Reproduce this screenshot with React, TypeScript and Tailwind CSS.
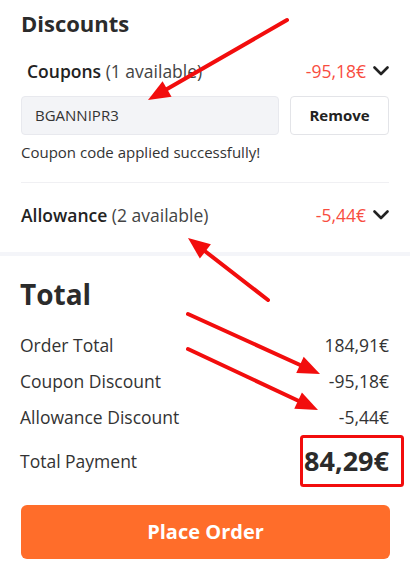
import React from "react";

const arrows = [
	{ x1: 287, y1: 20, x2: 148, y2: 100 },
	{ x1: 268, y1: 300, x2: 188, y2: 238 },
	{ x1: 188, y1: 314, x2: 320, y2: 374 },
	{ x1: 188, y1: 349, x2: 318, y2: 410 },
];

function Chevron() {
	return (
		<svg width="16" height="10" viewBox="0 0 16 10" className="ml-[7px]">
			<polyline
				points="1.5,1.5 8,8 14.5,1.5"
				fill="none"
				stroke="#222"
				strokeWidth="2.6"
				strokeLinecap="round"
				strokeLinejoin="round"
			/>
		</svg>
	);
}

function Arrow({ x1, y1, x2, y2 }: { x1: number; y1: number; x2: number; y2: number }) {
	const dx = x2 - x1;
	const dy = y2 - y1;
	const len = Math.hypot(dx, dy);
	const ux = dx / len;
	const uy = dy / len;
	const headLen = 22;
	const headW = 9;
	const bx = x2 - ux * headLen;
	const by = y2 - uy * headLen;
	const pts = `${x2},${y2} ${bx - uy * headW},${by + ux * headW} ${bx + uy * headW},${by - ux * headW}`;
	return (
		<g>
			<line x1={x1} y1={y1} x2={bx + ux * 2} y2={by + uy * 2} stroke="#f20d0d" strokeWidth="4" strokeLinecap="round" />
			<polygon points={pts} fill="#f20d0d" />
		</g>
	);
}

function Row({ label, value }: { label: string; value: string }) {
	return (
		<div className="flex items-center justify-between h-[24px] text-[17.5px] leading-[24px]">
			<span>{label}</span>
			<span>{value}</span>
		</div>
	);
}

export default function App() {
	return (
		<div
			className="relative w-[410px] h-[574px] overflow-hidden bg-white text-[#333]"
			style={{ fontFamily: '"Open Sans", sans-serif' }}
		>
			{/* Discounts */}
			<div className="px-[21px] pt-[7px] pb-[25px]">
				<h2 className="text-[22px] leading-[32px] font-bold text-[#2b2b2b]">Discounts</h2>

				<div className="mt-[20px] flex items-center justify-between pl-[6px] h-[24px] text-[17.5px] leading-[24px]">
					<div>
						<span className="font-semibold text-[#222]">Coupons</span>
						<span className="text-[#444]"> (1 available)</span>
					</div>
					<div className="flex items-center">
						<span className="text-[#f84d3f]">-95,18€</span>
						<Chevron />
					</div>
				</div>

				<div className="mt-[13px] flex gap-[11px]">
					<div className="flex-1 h-[39px] bg-[#f3f4f7] border border-[#e8e9ee] rounded-[4px] flex items-center px-[13px] text-[15px] text-[#333]">
						BGANNIPR3
					</div>
					<button className="w-[99px] h-[39px] bg-white border border-[#e3e4e8] rounded-[4px] text-[15px] font-bold text-[#222]">
						Remove
					</button>
				</div>

				<p className="mt-[8px] text-[15px] leading-[18px] text-[#333]">
					Coupon code applied successfully!
				</p>

				<div className="mt-[21px] h-px bg-[#f0f0f3]" />

				<div className="mt-[20px] flex items-center justify-between h-[24px] text-[17.5px] leading-[24px]">
					<div>
						<span className="font-semibold text-[#222]">Allowance</span>
						<span className="text-[#444]"> (2 available)</span>
					</div>
					<div className="flex items-center">
						<span className="text-[#f84d3f]">-5,44€</span>
						<Chevron />
					</div>
				</div>
			</div>

			<div className="h-[4px] bg-[#f4f5f9]" />

			{/* Total */}
			<div className="px-[20px] pt-[20px]">
				<h2 className="text-[28px] leading-[36px] font-bold text-[#2b2b2b]">Total</h2>

				<div className="mt-[21px] flex flex-col gap-[12px] pr-[1px]">
					<Row label="Order Total" value="184,91€" />
					<Row label="Coupon Discount" value="-95,18€" />
					<Row label="Allowance Discount" value="-5,44€" />
				</div>

				<div className="mt-[14px] flex items-center justify-between h-[36px] pr-[1px]">
					<span className="text-[17.5px] leading-[24px]">Total Payment</span>
					<span className="text-[27px] leading-[36px] font-bold text-[#2b2b2b]">84,29€</span>
				</div>

				<button className="mt-[26px] w-[369px] ml-[1px] h-[54px] rounded-[6px] bg-[#ff6d2a] text-white text-[20px] font-bold">
					Place Order
				</button>
			</div>

			{/* annotations */}
			<svg className="absolute inset-0 pointer-events-none" width="410" height="574">
				{arrows.map((a, i) => (
					<Arrow key={i} {...a} />
				))}
				<rect x="301.5" y="436.5" width="101" height="49" rx="2" fill="none" stroke="#f20d0d" strokeWidth="3" />
			</svg>
		</div>
	);
}
